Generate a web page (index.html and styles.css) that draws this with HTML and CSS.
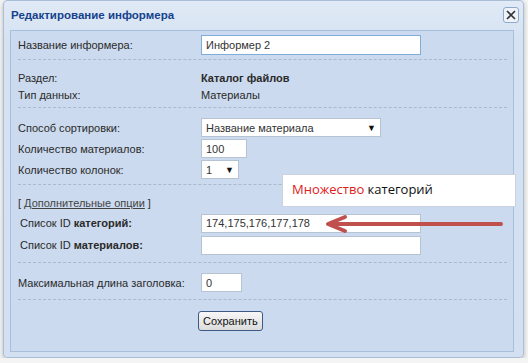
FILE: index.html
```html
<!DOCTYPE html>
<html lang="ru">

<head>
    <meta charset="UTF-8">
    <title>Редактирование информера</title>
    <link rel="stylesheet" href="styles.css">
</head>

<body>
    <div class="window">
        <div class="window-header">
            <span class="window-title">Редактирование информера</span>
            <span class="close-btn">
                <svg width="10" height="10" viewBox="0 0 10 10">
                    <path d="M1 1 L9 9 M9 1 L1 9" stroke="#333" stroke-width="1.6" fill="none" />
                </svg>
            </span>
        </div>
        <div class="panel">
            <div class="row">
                <label>Название информера:</label>
                <input type="text" class="input wide focused" value="Информер 2">
            </div>
            <div class="sep"></div>

            <div class="row small">
                <label>Раздел:</label>
                <strong class="value">Каталог файлов</strong>
            </div>
            <div class="row small">
                <label>Тип данных:</label>
                <span class="value">Материалы</span>
            </div>
            <div class="sep"></div>

            <div class="row">
                <label>Способ сортировки:</label>
                <div class="select sort">Название материала <span class="caret">&#9660;</span></div>
            </div>
            <div class="row">
                <label>Количество материалов:</label>
                <input type="text" class="input short" value="100">
            </div>
            <div class="row">
                <label>Количество колонок:</label>
                <div class="select cols">1 <span class="caret">&#9660;</span></div>
            </div>
            <div class="sep"></div>

            <div class="more">[ <a href="#">Дополнительные опции</a> ]</div>
            <div class="row indent">
                <label>Список ID <b>категорий:</b></label>
                <input type="text" class="input wide" value="174,175,176,177,178">
            </div>
            <div class="row indent">
                <label>Список ID <b>материалов:</b></label>
                <input type="text" class="input wide" value="">
            </div>
            <div class="sep loose"></div>

            <div class="row">
                <label>Максимальная длина заголовка:</label>
                <input type="text" class="input tiny" value="0">
            </div>
            <div class="sep loose"></div>

            <div class="actions">
                <button>Сохранить</button>
            </div>
        </div>
    </div>

    <!-- annotation drawn over the screenshot -->
    <div class="callout"><span class="red">Множество</span> категорий</div>
    <svg class="arrow" width="190" height="20" viewBox="0 0 190 20">
        <path d="M178 10 L10 10" stroke="#c0504d" stroke-width="4" stroke-linecap="round" fill="none" />
        <path d="M22 3 L5 10 L22 17" stroke="#c0504d" stroke-width="4" stroke-linecap="round" stroke-linejoin="round" fill="none" />
    </svg>
</body>

</html>
```

FILE: styles.css
```css
body {
    margin: 0;
    background-color: #f4f4f4;
    font-family: "Liberation Sans", Arial, sans-serif;
    font-size: 11px;
    color: #2a2a2a;
    position: relative;
}

.window {
    margin-left: 3px;
    width: 521px;
    height: 358px;
    box-sizing: border-box;
    border: 1px solid #a9bfd6;
    border-radius: 4px;
    background: linear-gradient(#e1eaf6, #d5e2f2 40px, #d2e0f2);
    box-shadow: 0 2px 4px rgba(0, 0, 0, 0.25);
    padding: 0 9px 0 6px;
}

.window-header {
    height: 27px;
    padding-bottom: 2px;
    display: flex;
    align-items: center;
    justify-content: space-between;
}

.window-title {
    font-weight: bold;
    font-size: 11.5px;
    color: #15428b;
    padding-left: 1px;
}

.close-btn {
    width: 14px;
    height: 14px;
    border: 1px solid #8fa9c9;
    border-radius: 3px;
    background: #eef3fa;
    display: flex;
    align-items: center;
    justify-content: center;
    margin-right: -5px;
}

.panel {
    height: 322px;
    box-sizing: border-box;
    border: 1px solid #a8bfdc;
    background-color: #cbdaee;
    padding: 3px 6px 0 7px;
}

.row {
    display: flex;
    align-items: center;
    height: 21px;
    white-space: nowrap;
}

.row.small {
    height: 17px;
}

.row.indent {
    height: 22px;
}

.row label {
    width: 183px;
    flex-shrink: 0;
}

.row.indent label {
    padding-left: 2px;
    width: 181px;
}

.sep {
    border-top: 1px dashed #aab9cc;
    margin: 4px 0 9px;
}

.sep.loose {
    margin-top: 6px;
}

.input {
    font-family: inherit;
    font-size: 11px;
    color: #333;
    height: 19px;
    box-sizing: border-box;
    border: 1px solid #b5c3d3;
    background-color: #fff;
    padding: 0 4px;
    margin: 0;
}

.input.wide {
    width: 220px;
}

.input.focused {
    border-color: #7eadd9;
    height: 20px;
}

.input.short {
    width: 46px;
}

.input.tiny {
    width: 41px;
}

.select {
    height: 19px;
    box-sizing: border-box;
    border: 1px solid #b5c3d3;
    background-color: #fff;
    padding: 0 4px;
    display: flex;
    align-items: center;
    justify-content: space-between;
    color: #333;
}

.select.sort {
    width: 180px;
}

.select.cols {
    width: 38px;
}

.caret {
    font-size: 9px;
    color: #111;
}

.more {
    height: 18px;
    display: flex;
    align-items: center;
    color: #333;
}

.more a {
    color: #444;
    margin: 0 3px;
}

.actions {
    padding-left: 180px;
    padding-top: 2px;
}

button {
    font-family: inherit;
    font-size: 11px;
    color: #111;
    height: 20px;
    padding: 0 4px;
    border: 1px solid #3c5a84;
    border-radius: 3px;
    background: linear-gradient(#f7f7f7, #dcdcdc);
}

.callout {
    position: absolute;
    left: 282px;
    top: 174px;
    width: 234px;
    height: 33px;
    box-sizing: border-box;
    background-color: #fff;
    border: 1px solid #c9d4e0;
    font-family: "Open Sans", sans-serif;
    font-size: 13px;
    color: #111;
    padding: 5px 0 0 9px;
}

.callout .red {
    color: #e0201b;
}

.arrow {
    position: absolute;
    left: 323px;
    top: 214px;
}
```
